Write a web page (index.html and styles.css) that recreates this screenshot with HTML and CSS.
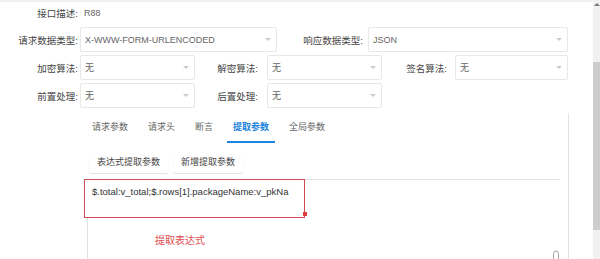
FILE: index.html
```html
<!DOCTYPE html>
<html lang="zh-CN">
<head>
    <meta charset="UTF-8">
    <meta name="viewport" content="width=device-width, initial-scale=1.0">
    <title>接口配置</title>
    <link rel="stylesheet" href="styles.css">
</head>
<body>
    <div class="page">
        <div class="main">
            <div class="form">
                <div class="row row-first">
                    <span class="label w80">接口描述:</span>
                    <span class="value">R88</span>
                </div>
                <div class="row">
                    <span class="label w80">请求数据类型:</span>
                    <div class="select w197"><span>X-WWW-FORM-URLENCODED</span><i class="arrow"></i></div>
                    <span class="label w88">响应数据类型:</span>
                    <div class="select w200 ml3"><span>JSON</span><i class="arrow"></i></div>
                </div>
                <div class="row">
                    <span class="label w80">加密算法:</span>
                    <div class="select w115"><span>无</span><i class="arrow"></i></div>
                    <span class="label w65">解密算法:</span>
                    <div class="select w115 ml7"><span>无</span><i class="arrow"></i></div>
                    <span class="label w65 pr0">签名算法:</span>
                    <div class="select w113 ml8"><span>无</span><i class="arrow"></i></div>
                </div>
                <div class="row">
                    <span class="label w80">前置处理:</span>
                    <div class="select w115"><span>无</span><i class="arrow"></i></div>
                    <span class="label w65">后置处理:</span>
                    <div class="select w115 ml7"><span>无</span><i class="arrow"></i></div>
                </div>
            </div>

            <div class="panel">
                <div class="tabs">
                    <span class="tab">请求参数</span>
                    <span class="tab">请求头</span>
                    <span class="tab">断言</span>
                    <span class="tab active">提取参数</span>
                    <span class="tab">全局参数</span>
                </div>
                <div class="actions">
                    <span class="btn">表达式提取参数</span>
                    <span class="btn">新增提取参数</span>
                </div>
                <div class="editor">
                    <div class="expr">$.total:v_total;$.rows[1].packageName:v_pkNa<i class="grip"></i></div>
                    <div class="error">提取表达式</div>
                    <svg class="corner" width="8" height="10" viewBox="0 0 8 10">
                        <path d="M1.5 10 V4.5 A2.5 2.5 0 0 1 6.5 4.5 V10" fill="none" stroke="#a8a8a8" stroke-width="1"/>
                    </svg>
                </div>
            </div>
        </div>
        <div class="scrollbar">
            <i class="up"></i>
            <div class="thumb"></div>
        </div>
    </div>
</body>
</html>
```

FILE: styles.css
```css
body {
    margin: 0;
    font-family: "Liberation Sans", "Noto Sans CJK SC", sans-serif;
    background-color: #fff;
}

.page {
    display: flex;
    width: 600px;
    height: 259px;
    overflow: hidden;
}

.main {
    width: 593px;
    border-top: 2px solid #f0f0f0;
    box-sizing: border-box;
}

/* Form rows */
.form {
    display: flex;
    flex-direction: column;
    gap: 3px;
}

.row {
    display: flex;
    align-items: center;
    height: 25px;
}

.row-first {
    height: 22px;
}

.label {
    text-align: right;
    padding-right: 2px;
    box-sizing: border-box;
    color: #444;
    font-size: 9.5px;
    flex-shrink: 0;
}

.value {
    padding-left: 4px;
    color: #666;
    font-size: 9px;
}

.select {
    height: 25px;
    box-sizing: border-box;
    border: 1px solid #e8e8e8;
    border-radius: 2px;
    display: flex;
    align-items: center;
    justify-content: space-between;
    padding: 0 5px 0 4px;
    color: #666;
    font-size: 9px;
    flex-shrink: 0;
}

.arrow {
    border-left: 3px solid transparent;
    border-right: 3px solid transparent;
    border-top: 3px solid #cbcbcb;
}

.w65 { width: 65px; }
.w80 { width: 80px; }
.w88 { width: 88px; }
.w113 { width: 113px; }
.w115 { width: 115px; }
.w197 { width: 197px; }
.w200 { width: 200px; }
.ml3 { margin-left: 3px; }
.ml7 { margin-left: 7px; }
.ml8 { margin-left: 8px; }
.pr0 { padding-right: 0; }

/* Lower panel */
.panel {
    width: 569px;
    height: 146px;
    box-sizing: border-box;
    border-right: 1px solid #e3e3e3;
    margin-top: 5px;
}

.tabs {
    display: flex;
    gap: 8px;
    padding-left: 86px;
}

.tab {
    padding: 0 6px;
    line-height: 28px;
    font-size: 9px;
    color: #666;
    border-bottom: 2px solid transparent;
}

.tab.active {
    color: #2183dc;
    border-bottom-color: #2183dc;
    font-weight: bold;
}

.actions {
    display: flex;
    gap: 5px;
    padding-left: 89px;
    margin-top: 8px;
}

.btn {
    height: 22px;
    line-height: 22px;
    padding: 0 8px;
    font-size: 9px;
    color: #444;
    background: #fff;
    border-radius: 2px;
    box-shadow: 0 1px 1px rgba(0, 0, 0, 0.12);
}

.editor {
    position: relative;
    margin: 6px 0 0 87px;
    width: 473px;
    height: 90px;
    box-sizing: border-box;
    border-top: 1px solid #e3e3e3;
    border-left: 1px solid #e3e3e3;
}

.expr {
    position: relative;
    margin: -1px 0 0 -4px;
    width: 221px;
    height: 39px;
    box-sizing: border-box;
    border: 1px solid #d14a55;
    padding: 6px 7px;
    font-size: 9.5px;
    line-height: 11px;
    color: #333;
    background: #fff;
}

.grip {
    position: absolute;
    right: -3px;
    bottom: 1px;
    width: 4px;
    height: 4px;
    background: #e0393e;
}

.error {
    margin: 17px 0 0 67px;
    font-size: 10px;
    line-height: 12px;
    color: #e04a4f;
}

.corner {
    position: absolute;
    left: 464px;
    top: 69px;
}

/* Scrollbar */
.scrollbar {
    width: 7px;
    background: #f1f1f1;
    display: flex;
    flex-direction: column;
    align-items: center;
}

.up {
    margin-top: 3px;
    border-left: 3px solid transparent;
    border-right: 3px solid transparent;
    border-bottom: 3px solid #777;
}

.thumb {
    margin-top: 56px;
    width: 7px;
    height: 168px;
    background: #cdcdcd;
}
```
